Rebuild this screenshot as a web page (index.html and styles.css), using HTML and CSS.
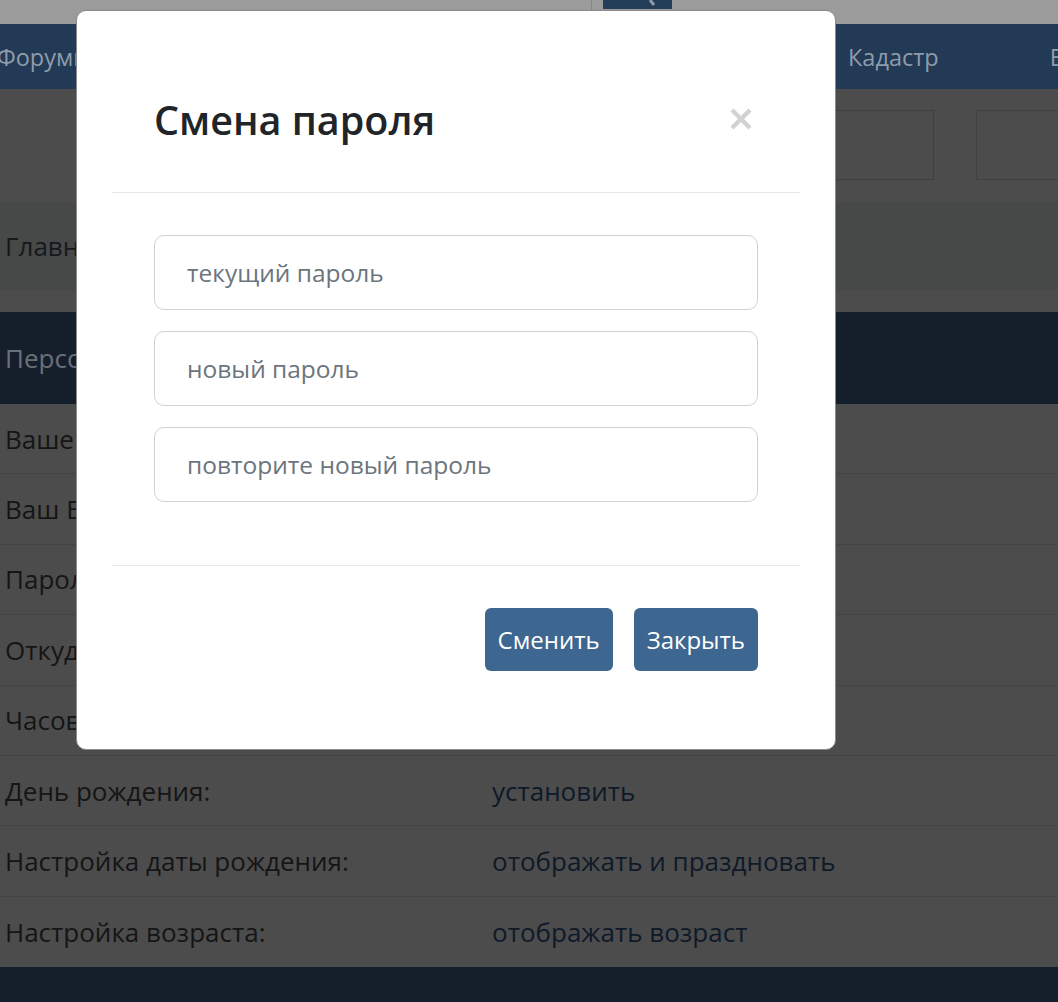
FILE: index.html
```
<!DOCTYPE html>
<html lang="ru">
<head>
    <meta charset="UTF-8">
    <meta name="viewport" content="width=device-width, initial-scale=1.0">
    <title>Смена пароля</title>
    <link rel="stylesheet" href="styles.css">
</head>
<body>
    <div class="page">
        <div class="topbar">
            <div class="topbar__search"></div>
            <div class="topbar__button">
                <svg width="20" height="9" viewBox="0 0 20 9"><line x1="12" y1="0" x2="16" y2="5" stroke="#8a9aab" stroke-width="3"/></svg>
            </div>
        </div>
        <nav class="nav">
            <a class="nav__item nav__item--first" href="#">Форумистика</a>
            <a class="nav__item" href="#">Кадастр</a>
            <a class="nav__item nav__item--last" href="#">Войти</a>
        </nav>
        <div class="boxes">
            <div class="boxes__item"></div>
            <div class="boxes__item"></div>
        </div>
        <div class="crumbs">Главная</div>
        <div class="panel">
            <div class="panel__head">Персональные данные</div>
            <div class="row"><span class="row__label">Ваше имя:</span><span class="row__value"></span></div>
            <div class="row"><span class="row__label">Ваш E-mail:</span><span class="row__value"></span></div>
            <div class="row"><span class="row__label">Пароль:</span><span class="row__value"></span></div>
            <div class="row"><span class="row__label">Откуда:</span><span class="row__value"></span></div>
            <div class="row"><span class="row__label">Часовой пояс:</span><span class="row__value"></span></div>
            <div class="row"><span class="row__label">День рождения:</span><a class="row__value" href="#">установить</a></div>
            <div class="row"><span class="row__label">Настройка даты рождения:</span><a class="row__value" href="#">отображать и праздновать</a></div>
            <div class="row"><span class="row__label">Настройка возраста:</span><a class="row__value" href="#">отображать возраст</a></div>
        </div>
        <div class="footer"></div>
    </div>

    <div class="modal">
        <div class="modal__header">
            <h2 class="modal__title">Смена пароля</h2>
            <button class="modal__close" type="button" aria-label="Закрыть">
                <svg width="24" height="24" viewBox="0 0 24 24"><path d="M3 3 L21 21 M21 3 L3 21" stroke="#d2d2d2" stroke-width="4.5"/></svg>
            </button>
        </div>
        <div class="modal__body">
            <input class="field" type="password" placeholder="текущий пароль">
            <input class="field" type="password" placeholder="новый пароль">
            <input class="field" type="password" placeholder="повторите новый пароль">
        </div>
        <div class="modal__footer">
            <button class="btn" type="button">Сменить</button>
            <button class="btn" type="button">Закрыть</button>
        </div>
    </div>
</body>
</html>
```

FILE: styles.css
```
* {
    box-sizing: border-box;
}
body {
    margin: 0;
    padding: 0;
    font-family: "Open Sans", "Noto Sans", sans-serif;
    background: #4c4c4c;
    overflow: hidden;
}
.page {
    height: 1002px;
    overflow: hidden;
}
.topbar {
    height: 24px;
    display: flex;
    background: #9b9b9b;
}
.topbar__search {
    width: 592px;
    border-right: 1px solid #858585;
}
.topbar__button {
    width: 69px;
    height: 9px;
    margin-left: 11px;
    background: #233c57;
    display: flex;
    justify-content: flex-end;
    padding-right: 14px;
}
.nav {
    height: 65px;
    background: #223a55;
    display: grid;
    grid-template-columns: 848px auto auto;
    align-items: center;
    white-space: nowrap;
    overflow: hidden;
}
.nav__item {
    color: #8e9cab;
    text-decoration: none;
    font-size: 23.5px;
}
.nav__item--first {
    margin-left: -3px;
}
.nav__item--last {
    margin-left: 111px;
}
.boxes {
    height: 113px;
    display: flex;
    padding: 21px 0 0 835px;
    gap: 42px;
}
.boxes__item {
    flex-shrink: 0;
    width: 99px;
    height: 70px;
    border: 1px solid #404040;
}
.crumbs {
    height: 88px;
    background: #474848;
    display: flex;
    align-items: center;
    padding-left: 5px;
    font-size: 26px;
    color: #15191d;
}
.panel {
    margin-top: 22px;
}
.panel__head {
    height: 92px;
    background: #151f2b;
    display: flex;
    align-items: center;
    padding-left: 5px;
    font-size: 26px;
    color: #6b7078;
}
.row {
    height: 70.4px;
    display: flex;
    align-items: center;
    padding-left: 5px;
    border-bottom: 1px solid #444;
    font-size: 26px;
}
.row:last-child {
    border-bottom: none;
}
.row__label {
    width: 487px;
    color: #151515;
}
.row__value {
    color: #0e1a29;
    text-decoration: none;
}
.footer {
    height: 40px;
    background: #151f2b;
}
.modal {
    position: fixed;
    left: 76px;
    top: 10px;
    width: 760px;
    height: 740px;
    background: #fff;
    border: 1px solid #8a8a8a;
    border-radius: 10px;
    padding: 0 35px;
}
.modal__header {
    height: 182px;
    display: flex;
    justify-content: space-between;
    align-items: flex-start;
    padding: 90px 47px 0 42px;
    border-bottom: 1px solid #e6e8ea;
}
.modal__title {
    margin: 0;
    font-size: 39.5px;
    font-weight: 600;
    line-height: 1;
    color: #212529;
}
.modal__close {
    border: none;
    background: none;
    padding: 0;
    margin-top: 6px;
    cursor: pointer;
}
.modal__body {
    padding: 42px 42px 63px;
    display: flex;
    flex-direction: column;
    gap: 21px;
    border-bottom: 1px solid #e6e8ea;
}
.field {
    height: 75px;
    width: 100%;
    border: 1px solid #cfd3d8;
    border-radius: 10px;
    padding: 0 32px;
    font-family: inherit;
    font-size: 24.5px;
    color: #212529;
}
.field::placeholder {
    color: #6c757d;
}
.field:focus {
    outline: none;
}
.modal__footer {
    display: flex;
    justify-content: flex-end;
    gap: 21px;
    padding: 42px 42px 0;
}
.btn {
    height: 63px;
    padding: 0 13px;
    border: none;
    border-radius: 6px;
    background: #3d6690;
    color: #fff;
    font-family: inherit;
    font-size: 24px;
    cursor: pointer;
}
```
